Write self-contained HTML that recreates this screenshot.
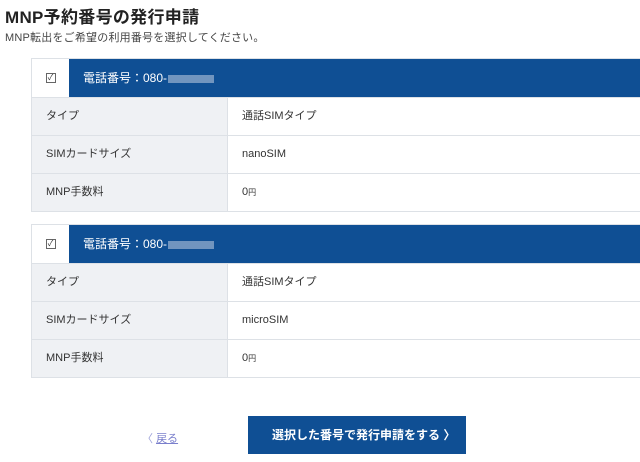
<!DOCTYPE html>
<html><head><meta charset="utf-8"><style>
*{margin:0;padding:0;box-sizing:border-box}
body{width:640px;height:462px;overflow:hidden;background:#fff;font-family:"Liberation Sans","Noto Sans CJK JP",sans-serif;color:#333;position:relative}
h1{position:absolute;left:5px;top:3px;font-size:17px;font-weight:bold;color:#222;letter-spacing:0.3px}
.sub{position:absolute;left:5px;top:29px;font-size:11px;color:#444;letter-spacing:0.2px}
.card{position:absolute;left:31px;width:620px;border:1px solid #dde1e6;border-right:none}
.hd{height:38px;display:flex}
.cb{width:37px;background:#fff;display:flex;align-items:center;justify-content:center}
.cb span{width:10px;height:10px;border:1px solid #666;font-size:8px;line-height:8px;text-align:center;color:#333}
.bl{flex:1;background:#0f4f94;color:#fff;font-size:12px;padding-left:14px;line-height:38px}
.bl i{display:inline-block;width:46px;height:8px;background:#9bb4d2;vertical-align:middle;margin-left:1px;opacity:.7}
.row{display:flex;height:38px;border-top:1px solid #dde1e6;font-size:11px;line-height:37px}
.l{width:196px;background:#eff1f4;padding-left:14px;border-right:1px solid #dde1e6}
.v{flex:1;padding-left:14px}
.btn{position:absolute;left:248px;top:416px;width:218px;height:38px;background:#0f4f94;color:#fff;font-size:12px;font-weight:bold;line-height:38px;padding-left:24px;white-space:nowrap}
.back{position:absolute;left:142px;top:430px;font-size:11px;color:#9a9fd8}
.back u{color:#7a7fcc}
</style></head><body>
<h1>MNP予約番号の発行申請</h1>
<div class="sub">MNP転出をご希望の利用番号を選択してください。</div>
<div class="card" style="top:58px">
<div class="hd"><div class="cb"><span>✓</span></div><div class="bl">電話番号：080-<i></i></div></div>
<div class="row"><div class="l">タイプ</div><div class="v">通話SIMタイプ</div></div>
<div class="row"><div class="l">SIMカードサイズ</div><div class="v">nanoSIM</div></div>
<div class="row"><div class="l">MNP手数料</div><div class="v">0<small style="font-size:8px">円</small></div></div>
</div>
<div class="card" style="top:224px">
<div class="hd"><div class="cb"><span>✓</span></div><div class="bl">電話番号：080-<i></i></div></div>
<div class="row"><div class="l">タイプ</div><div class="v">通話SIMタイプ</div></div>
<div class="row"><div class="l">SIMカードサイズ</div><div class="v">microSIM</div></div>
<div class="row"><div class="l">MNP手数料</div><div class="v">0<small style="font-size:8px">円</small></div></div>
</div>
<div class="back">〈 <u>戻る</u></div>
<div class="btn">選択した番号で発行申請をする 〉</div>
</body></html>
